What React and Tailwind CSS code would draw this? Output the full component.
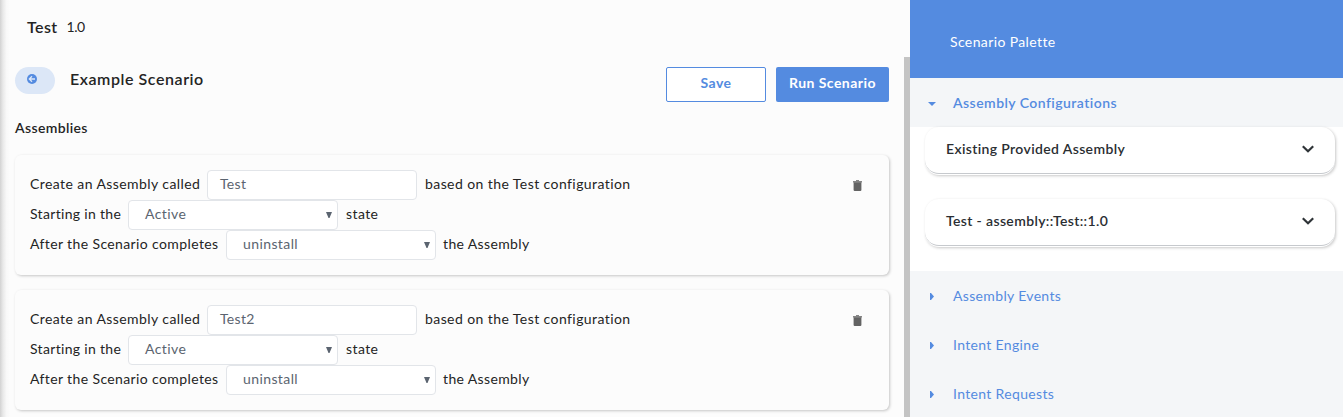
import React from "react";

function Caret() {
  return (
    <svg width="6" height="6" viewBox="0 0 6 6" className="mb-px shrink-0 fill-[#5b6470]">
      <path d="M0 0h6L3.5 6H2.5z" />
    </svg>
  );
}

function Trash() {
  return (
    <svg width="9" height="11" viewBox="0 0 9 11">
      <path d="M3 0h3v1h3v1.5H0V1h3z" fill="#858585" />
      <path d="M.6 2.3h7.8V10a1 1 0 0 1-1 1H1.6a1 1 0 0 1-1-1z" fill="#636363" />
    </svg>
  );
}

function Select({ value }) {
  return (
    <div className="flex h-[30px] w-[210px] items-center justify-between rounded border border-[#e2e5e9] bg-white pl-4 pr-[5px] text-[#5b6470] tracking-[0.4px]">
      <span className="pb-[2px]">{value}</span>
      <Caret />
    </div>
  );
}

function AssemblyCard({ name }) {
  return (
    <section className="flex h-[120px] w-[874px] justify-between rounded-md bg-[#fcfcfc] pl-[15px] pr-[27px] pt-[15px] shadow-[1px_1px_3px_rgba(0,0,0,0.22)]">
      <div className="flex flex-col whitespace-nowrap">
        <div className="flex h-[30px] items-center">
          <span className="w-[177px] pb-[2px]">Create an Assembly called</span>
          <div className="flex h-[30px] w-[210px] items-center rounded border border-[#e2e5e9] bg-white pb-[2px] pl-3 tracking-[0.3px] text-[#5b6470]">
            {name}
          </div>
          <span className="pb-[2px] pl-2">based on the Test configuration</span>
        </div>
        <div className="flex h-[30px] items-center">
          <span className="w-[98px] pb-[2px] tracking-[0.32px]">Starting in the</span>
          <Select value="Active" />
          <span className="pb-[2px] pl-2">state</span>
        </div>
        <div className="flex h-[30px] items-center">
          <span className="w-[196px] pb-[2px] tracking-[0.38px]">After the Scenario completes</span>
          <Select value="uninstall" />
          <span className="pb-[2px] pl-[7px] tracking-[0.36px]">the Assembly</span>
        </div>
      </div>
      <div className="pt-[10px]">
        <Trash />
      </div>
    </section>
  );
}

function PaletteItem({ label }) {
  return (
    <div className="h-12 w-[410px] rounded-[14px] bg-white shadow-[1px_1px_3px_rgba(0,0,0,0.22)]">
      <div className="flex h-[47px] items-center justify-between rounded-[14px] border-b border-[#c6c9cd] pl-[21px] pr-[21px]">
        <span className="pb-[2px] font-semibold text-[#2a2e32] tracking-[0.36px]">{label}</span>
        <svg width="12" height="8" viewBox="0 0 12 8" fill="none" stroke="#2f3438" strokeWidth="2.2" className="mb-[3px]">
          <path d="M.8 1.2 6 6.3l5.2-5.1" />
        </svg>
      </div>
    </div>
  );
}

function PaletteSection({ label }) {
  return (
    <div className="flex h-[49px] items-center bg-[#f4f6f8] pl-5 text-[#548be0]">
      <svg width="4" height="7" viewBox="0 0 4 7" className="mr-[19px] mt-[2px] fill-[#548be0]">
        <path d="M0 0h1l3 3.5L1 7H0z" />
      </svg>
      <span className="tracking-[0.34px]">{label}</span>
    </div>
  );
}

export default function App() {
  return (
    <div className="flex h-[417px] w-[1343px] overflow-hidden bg-[#fcfcfc] font-['Lato',sans-serif] text-[14px] leading-5 tracking-[0.42px] text-[#242424]">
      <div className="w-[10px] shrink-0 bg-[linear-gradient(to_right,#d2d2d2,#e9e9e9_30%,#f8f8f8_65%,#fcfcfc)]" />
      <main className="w-[894px] shrink-0 pl-[5px]">
        <header className="flex h-[54px] items-center gap-[9px] pl-3">
          <h1 className="pb-px text-[16px] font-semibold tracking-[0.4px]">Test</h1>
          <span className="tracking-[-0.5px]">1.0</span>
        </header>
        <div className="flex h-[61px] w-[874px] pt-[13px]">
          <button className="flex h-[27px] w-10 items-center rounded-[14px] bg-[#dce7f7] pb-[3px] pl-3">
            <svg width="10" height="10" viewBox="0 0 10 10" fill="none">
              <circle cx="5" cy="5" r="5" fill="#548be0" />
              <path d="M8 5H2.5M5 2.3 2.3 5 5 7.7" stroke="#dce7f7" strokeWidth="1.3" />
            </svg>
          </button>
          <h2 className="ml-[15px] mt-[2px] flex-1 text-[16px] font-semibold tracking-[0.56px]">Example Scenario</h2>
          <button className="h-[35px] w-[100px] rounded-[2px] border border-[#548be0] bg-white pb-1 font-bold text-[#548be0]">Save</button>
          <button className="ml-[10px] h-[35px] w-[113px] rounded-[2px] bg-[#548be0] pb-1 font-bold tracking-[0.45px] text-white">Run Scenario</button>
        </div>
        <h3 className="h-10 pt-[3px] font-semibold tracking-[0.36px]">Assemblies</h3>
        <div className="flex flex-col gap-[15px]">
          <AssemblyCard name="Test" />
          <AssemblyCard name="Test2" />
        </div>
      </main>
      <div className="w-[6px] shrink-0 pt-[57px]">
        <div className="h-[360px] bg-[#c4c4c4]" />
      </div>
      <aside className="w-[433px] shrink-0 bg-white">
        <div className="flex h-[78px] items-center bg-[#548be0] pl-10 pt-[5px] text-white tracking-[0.38px]">Scenario Palette</div>
        <div className="flex h-[49px] items-center bg-[#f4f6f8] pl-[18px] text-[#548be0]">
          <svg width="8" height="4" viewBox="0 0 8 4" className="mr-[17px] mt-[3px] fill-[#548be0]">
            <path d="M0 0h8L4 4z" />
          </svg>
          <span className="font-semibold tracking-[0.45px]">Assembly Configurations</span>
        </div>
        <div className="flex h-36 flex-col gap-6 pl-[15px]">
          <PaletteItem label="Existing Provided Assembly" />
          <PaletteItem label="Test - assembly::Test::1.0" />
        </div>
        <PaletteSection label="Assembly Events" />
        <PaletteSection label="Intent Engine" />
        <PaletteSection label="Intent Requests" />
      </aside>
    </div>
  );
}
